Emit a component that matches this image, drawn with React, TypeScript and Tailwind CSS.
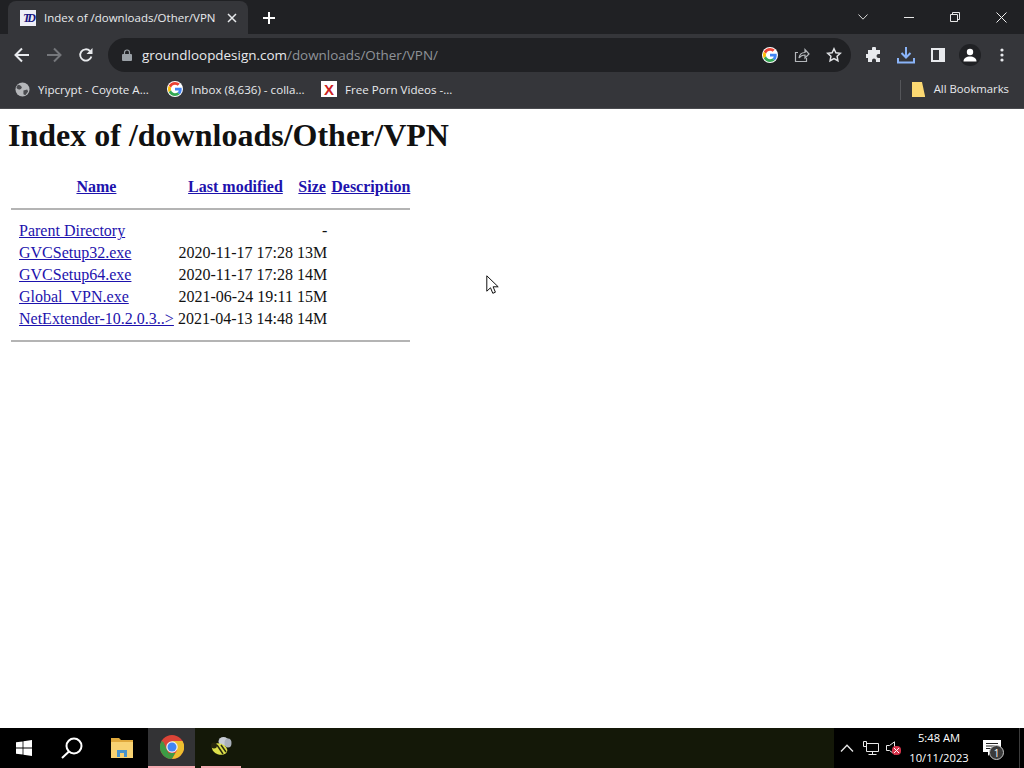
import React from "react";

const UI = { fontFamily: '"Open Sans", "Noto Sans", sans-serif' };

function GoogleG({ size = 16 }: { size?: number }) {
  return (
    <svg width={size} height={size} viewBox="0 0 48 48">
      <path fill="#EA4335" d="M24 9.500c3.500 0 6.700 1.200 9.200 3.600l6.900-6.900C35.900 2.400 30.500 0 24 0 14.600 0 6.500 5.400 2.600 13.200l8 6.200C12.500 13.600 17.800 9.500 24 9.500z" />
      <path fill="#4285F4" d="M47 24.500c0-1.600-.1-3.100-.4-4.500H24v9h12.900c-.6 3-2.200 5.500-4.700 7.200l7.700 6c4.500-4.200 7.100-10.300 7.100-17.700z" />
      <path fill="#FBBC05" d="M10.600 28.600c-.5-1.400-.8-3-.8-4.600s.3-3.200.8-4.600l-8-6.200C.9 16.500 0 20.100 0 24s.9 7.500 2.600 10.800l8-6.200z" />
      <path fill="#34A853" d="M24 48c6.500 0 11.900-2.100 15.900-5.800l-7.700-6c-2.200 1.400-4.900 2.300-8.200 2.300-6.200 0-11.500-4.200-13.400-9.800l-8 6.200C6.500 42.600 14.600 48 24 48z" />
    </svg>
  );
}

function ChromeLogo() {
  return (
    <svg width="24" height="24" viewBox="0 0 48 48">
      <circle cx="24" cy="24" r="24" fill="#DB4437" />
      <path fill="#3d9b45" d="M24 48A24 24 0 0 1 3.200 12L13.600 30 24 48z" />
      <path fill="#3d9b45" d="M3.200 12 13.600 30 24 48l7-12H17L7 14z" />
      <path fill="#EDBE2F" d="M45 12a24 24 0 0 1-21 36l10.400-18L24 12z" />
      <circle cx="24" cy="24" r="11.500" fill="#f2f2f2" />
      <circle cx="24" cy="24" r="9" fill="#4285F4" />
    </svg>
  );
}

function Favicon() {
  return (
    <div className="flex h-4 w-4 items-center justify-center overflow-hidden bg-[#eeeef6]">
      <span className="whitespace-nowrap text-[12px] font-bold italic leading-none tracking-[-3px] text-[#16147e]" style={{ fontFamily: '"Liberation Serif", serif' }}>
        TD
      </span>
    </div>
  );
}

function Tabstrip() {
  return (
    <div className="flex h-[34px] shrink-0 items-end bg-[#202124]">
      <div className="ml-2 flex h-[33px] w-[240px] items-center rounded-t-lg bg-[#35363a] pl-[12px]">
        <Favicon />
        <span className="ml-2 w-[180px] truncate text-[11.5px] text-[#e8eaed]" style={UI}>
          Index of /downloads/Other/VPN
        </span>
        <svg width="10" height="10" viewBox="0 0 10 10" className="ml-[3px]" stroke="#e8eaed" strokeWidth="1.500" fill="none">
          <path d="M1 1l8 8M9 1l-8 8" />
        </svg>
      </div>
      <div className="flex h-[33px] w-[42px] items-center justify-center">
        <svg width="12" height="12" viewBox="0 0 12 12" stroke="#fff" strokeWidth="2" fill="none">
          <path d="M6 0v12M0 6h12" />
        </svg>
      </div>
      <div className="flex-1" />
      <div className="flex h-[34px] items-center">
        <div className="flex h-full w-[46px] items-center justify-center">
          <svg width="10" height="6" viewBox="0 0 10 6" stroke="#d8d8d8" fill="none">
            <path d="M.5.5 5 5.200 9.500.5" />
          </svg>
        </div>
        <div className="flex h-full w-[46px] items-center justify-center">
          <svg width="10" height="10" viewBox="0 0 10 10" stroke="#e8e8e8" fill="none">
            <path d="M0 5.500h10" />
          </svg>
        </div>
        <div className="flex h-full w-[46px] items-center justify-center">
          <svg width="10" height="10" viewBox="0 0 10 10" stroke="#e8e8e8" fill="none">
            <path d="M.5 2.500h7v7h-7zM2.500 2.500v-2h7v7h-2" />
          </svg>
        </div>
        <div className="flex h-full w-[46px] items-center justify-center">
          <svg width="11" height="11" viewBox="0 0 11 11" stroke="#f0f0f0" fill="none">
            <path d="M.5.5l10 10M10.500.5l-10 10" />
          </svg>
        </div>
      </div>
    </div>
  );
}

function ToolIcon({ children }: { children: React.ReactNode }) {
  return <div className="flex h-8 w-8 items-center justify-center">{children}</div>;
}

function Toolbar() {
  return (
    <div className="flex h-[38px] shrink-0 items-center bg-[#35363a] pl-[6px] pt-[4px]">
      <ToolIcon>
        <svg width="16" height="16" viewBox="0 0 16 16" stroke="#e8eaed" strokeWidth="2" fill="none">
          <path d="M15 8H2M8 1.500 1.500 8 8 14.500" />
        </svg>
      </ToolIcon>
      <ToolIcon>
        <svg width="16" height="16" viewBox="0 0 16 16" stroke="#75777b" strokeWidth="2" fill="none">
          <path d="M1 8h13M8 1.500 14.500 8 8 14.500" />
        </svg>
      </ToolIcon>
      <ToolIcon>
        <svg width="16" height="16" viewBox="0 0 16 16" fill="none">
          <path d="M13.400 9.500A5.700 5.700 0 1 1 12 4" stroke="#e8eaed" strokeWidth="1.800" />
          <path d="M14.500 1v6h-6z" fill="#e8eaed" />
        </svg>
      </ToolIcon>
      <div className="ml-[6px] flex h-[34px] w-[743px] items-center rounded-full bg-[#202124] pl-[14px] pr-[1px]">
        <svg width="10" height="12" viewBox="0 0 10 12" fill="#9aa0a6">
          <rect x="0" y="5" width="10" height="7" rx="1" />
          <path d="M2.500 5V3.500a2.500 2.500 0 0 1 5 0V5" fill="none" stroke="#9aa0a6" strokeWidth="1.200" />
        </svg>
        <div className="ml-[10px] flex-1 text-[13.45px]" style={UI}>
          <span className="text-[#e8eaed]">groundloopdesign.com</span>
          <span className="text-[#8f9399]">/downloads/Other/VPN/</span>
        </div>
        <div className="flex items-center">
          <div className="flex w-8 justify-center">
            <div className="rounded-full bg-white p-px">
              <GoogleG size={14} />
            </div>
          </div>
          <div className="flex w-8 justify-center">
            <svg width="16" height="16" viewBox="0 0 16 16" stroke="#b4b7bb" strokeWidth="1.200" fill="none">
              <path d="M4 5.500H1.500v9h11V11M5 11c.5-3.500 3-5.500 6-5.500V2.500l4 4.500-4 4V8c-2.500 0-4.500 1-6 3z" />
            </svg>
          </div>
          <div className="flex w-8 justify-center">
            <svg width="16" height="16" viewBox="0 0 16 16" stroke="#e0e2e5" strokeWidth="1.500" fill="none">
              <path d="m8 1.800 1.900 4 4.400.5-3.200 3 .8 4.400L8 11.500l-3.900 2.200.8-4.400-3.200-3 4.400-.5z" />
            </svg>
          </div>
        </div>
      </div>
      <div className="ml-[7px] flex">
        <ToolIcon>
          <svg width="16" height="16" viewBox="0 0 16 16" fill="#e8eaed">
            <path d="M6 1.500a2 2 0 0 1 4 0V3h4v4h-1.500a2 2 0 0 0 0 4H14v4h-4v-1.500a2 2 0 0 0-4 0V15H2v-4H.5a2 2 0 0 1 0-4H2V3h4z" />
          </svg>
        </ToolIcon>
        <ToolIcon>
          <svg width="18" height="18" viewBox="0 0 18 18" fill="none" stroke="#8ab4f8" strokeWidth="2">
            <path d="M9 1v10M4.500 7 9 11.500 13.500 7M1 12v4.500h16V12" />
          </svg>
        </ToolIcon>
        <ToolIcon>
          <svg width="14" height="14" viewBox="0 0 14 14">
            <rect width="14" height="14" fill="#e8eaed" />
            <rect x="2" y="2" width="6" height="10" fill="#35363a" />
          </svg>
        </ToolIcon>
        <ToolIcon>
          <div className="flex h-[22px] w-[22px] items-center justify-center rounded-full bg-[#202124]">
            <svg width="14" height="14" viewBox="0 0 14 14" fill="#fff">
              <circle cx="7" cy="4" r="3.200" />
              <path d="M0.500 13.500c0-3.500 3-5 6.500-5s6.500 1.500 6.500 5z" />
            </svg>
          </div>
        </ToolIcon>
        <ToolIcon>
          <svg width="4" height="14" viewBox="0 0 4 14" fill="#e8eaed">
            <circle cx="2" cy="2" r="1.600" />
            <circle cx="2" cy="7" r="1.600" />
            <circle cx="2" cy="12" r="1.600" />
          </svg>
        </ToolIcon>
      </div>
    </div>
  );
}

function Bookmark({ icon, label, w }: { icon: React.ReactNode; label: string; w: string }) {
  return (
    <div className={`flex items-center ${w}`}>
      <div className="flex w-4 justify-center">{icon}</div>
      <span className="ml-[8px] whitespace-nowrap text-[11.6px] text-[#e8eaed]" style={UI}>
        {label}
      </span>
    </div>
  );
}

function BookmarksBar() {
  return (
    <div className="flex h-[37px] shrink-0 items-center border-b border-[#4a4b4f] bg-[#35363a] pb-px pl-[14px] pr-[15px]">
      <Bookmark
        w="w-[153px]"
        label="Yipcrypt - Coyote A..."
        icon={
          <svg width="15" height="15" viewBox="0 0 16 16">
            <circle cx="8" cy="8" r="7.500" fill="#b5b7ba" />
            <path d="M3 3c2 0 3 1 4 2S6 8 4.500 8 1.500 6 1.500 6zM9 9l4-1 1 2-3 4-2-1z" fill="#4a4b4f" />
          </svg>
        }
      />
      <Bookmark
        w="w-[154px]"
        label="Inbox (8,636) - colla..."
        icon={
          <div className="rounded-full bg-white p-px">
            <GoogleG size={14} />
          </div>
        }
      />
      <Bookmark
        w="w-[140px]"
        label="Free Porn Videos -..."
        icon={
          <div className="flex h-4 w-4 items-center justify-center bg-white text-[15px] font-bold leading-none text-[#cc2222]" style={{ fontFamily: '"Liberation Sans", sans-serif' }}>
            X
          </div>
        }
      />
      <div className="flex-1" />
      <div className="h-[20px] w-px bg-[#55565a]" />
      <svg width="13" height="15" viewBox="0 0 13 15" className="ml-[11px]">
        <path d="M0 0h10l3 14v1H0z" fill="#fbd872" />
      </svg>
      <span className="ml-[9px] text-[11.3px] text-[#e8eaed]" style={UI}>
        All Bookmarks
      </span>
    </div>
  );
}

const Link = ({ children }: { children: React.ReactNode }) => <a className="text-[#1d12ad] underline">{children}</a>;

const ROWS = [
  ["GVCSetup32.exe", "2020-11-17 17:28", "13M"],
  ["GVCSetup64.exe", "2020-11-17 17:28", "14M"],
  ["Global_VPN.exe", "2021-06-24 19:11", "15M"],
  ["NetExtender-10.2.0.3..>", "2021-04-13 14:48", "14M"],
];

function Listing() {
  return (
    <div className="flex-1 bg-white p-2 text-[16px] leading-[18px] text-[#111111]" style={{ fontFamily: '"Liberation Serif", serif' }}>
      <h1 className="mb-[21.44px] text-[32px] font-bold leading-[37px]">Index of /downloads/Other/VPN</h1>
      <table className="border-separate border-spacing-[2px]">
        <tbody>
          <tr>
            <th className="p-px">&nbsp;</th>
            <th className="p-px"><Link>Name</Link></th>
            <th className="p-px"><Link>Last modified</Link></th>
            <th className="p-px"><Link>Size</Link></th>
            <th className="p-px"><Link>Description</Link></th>
          </tr>
          <tr>
            <th colSpan={5} className="p-px">
              <hr className="my-2 h-[2px] border-0 bg-[#b4b4b4]" />
            </th>
          </tr>
          <tr>
            <td className="p-px">&nbsp;</td>
            <td className="p-px"><Link>Parent Directory</Link></td>
            <td className="p-px">&nbsp;</td>
            <td className="p-px text-right">- </td>
            <td className="p-px">&nbsp;</td>
          </tr>
          {ROWS.map((r) => (
            <tr key={r[0]}>
              <td className="p-px">&nbsp;</td>
              <td className="p-px"><Link>{r[0]}</Link></td>
              <td className="p-px text-right">{r[1]}</td>
              <td className="p-px text-right">{r[2]}</td>
              <td className="p-px">&nbsp;</td>
            </tr>
          ))}
          <tr>
            <th colSpan={5} className="p-px">
              <hr className="my-2 h-[2px] border-0 bg-[#b4b4b4]" />
            </th>
          </tr>
        </tbody>
      </table>
    </div>
  );
}

function Taskbar() {
  return (
    <div className="flex h-10 shrink-0 items-stretch bg-[#141808]">
      <div className="flex w-[148px] bg-black">
        <div className="flex w-12 items-center justify-center">
          <svg width="16" height="16" viewBox="0 0 16 16" fill="#fff">
            <path d="M0 2.300 6.600 1.400v6.200H0zM7.400 1.300 16 0v7.600H7.400zM0 8.400h6.600v6.200L0 13.700zM7.400 8.400H16V16l-8.600-1.300z" />
          </svg>
        </div>
        <div className="flex w-12 items-center justify-center">
          <svg width="22" height="22" viewBox="0 0 22 22" stroke="#fff" strokeWidth="2" fill="none">
            <circle cx="13" cy="9" r="7.500" />
            <path d="M8 14.500 1 21" />
          </svg>
        </div>
        <div className="flex w-[52px] items-center justify-center">
          <svg width="22" height="20" viewBox="0 0 22 20">
            <path d="M0 0h8l2 2h12v18H0z" fill="#e0a93c" />
            <path d="M0 4h22v16H0z" fill="#f8d272" />
            <path d="M6 19v-7h10v7h-3v-4H9v4z" fill="#4a94cc" />
          </svg>
        </div>
      </div>
      <div className="flex w-[47px] flex-col items-center justify-center border-b-[2px] border-[#f4a9b0] bg-[#333335]">
        <ChromeLogo />
      </div>
      <div className="ml-[6px] flex w-[40px] items-center justify-center border-b-[2px] border-[#f4a9b0]">
        <svg width="24" height="24" viewBox="0 0 24 24">
          <ellipse cx="14.500" cy="6.500" rx="5" ry="4.500" fill="#c8ccd4" />
          <ellipse cx="19" cy="8" rx="3.500" ry="4.500" fill="#aab0ba" />
          <ellipse cx="10.500" cy="14" rx="8" ry="5.500" fill="#dde04a" transform="rotate(20 10.500 14)" />
          <path d="M8 10l6 9M12 10l5 7" stroke="#2a2a10" strokeWidth="1.500" />
          <circle cx="5" cy="10.500" r="3" fill="#26260c" />
        </svg>
      </div>
      <div className="flex-1" />
      <div className="flex w-[190px] items-center bg-black">
        <div className="flex w-[24px] justify-center pl-[2px]">
          <svg width="14" height="8" viewBox="0 0 14 8" stroke="#e8e8e8" strokeWidth="1.300" fill="none">
            <path d="M1 7.500 7 1.200l6 6.300" />
          </svg>
        </div>
        <div className="flex w-[26px] justify-center">
          <svg width="16" height="14" viewBox="0 0 16 14" stroke="#e8e8e8" fill="none">
            <path d="M3.500 3V.5h-3v5h3M3.500 2.500h12v8h-12zM9.500 10.500v3M5.500 13.500h8" />
          </svg>
        </div>
        <div className="relative flex w-[19px] justify-start pl-[2px]">
          <svg width="9" height="14" viewBox="0 0 9 14" stroke="#e8e8e8" fill="none">
            <path d="M.5 4.500h3L8.500.8v12.400l-5-3.700h-3z" />
          </svg>
          <div className="absolute left-[8px] top-[5px] flex h-[9px] w-[9px] items-center justify-center rounded-sm bg-[#d8344c]">
            <svg width="5" height="5" viewBox="0 0 5 5" stroke="#fff" fill="none">
              <path d="M0 0l5 5M5 0L0 5" />
            </svg>
          </div>
        </div>
        <div className="w-[72px] text-center text-[11.2px] leading-[20px] text-white" style={UI}>
          <div>5:48 AM</div>
          <div>10/11/2023</div>
        </div>
        <div className="relative ml-[6px] flex w-[22px] justify-center">
          <svg width="18" height="16" viewBox="0 0 18 16">
            <path d="M0 0h18v12H8l-3 4v-4H0z" fill="#fff" />
            <path d="M3 3.500h12M3 6h12M3 8.500h12" stroke="#222" />
          </svg>
          <div className="absolute left-[8px] top-[5px] flex h-[15px] w-[15px] items-center justify-center rounded-full border border-[#c8c8c8] bg-[#3a3a3a] text-[10px] leading-none text-white" style={UI}>
            1
          </div>
        </div>
        <div className="ml-[16px] h-full w-px bg-[#3c3c3c]" />
      </div>
    </div>
  );
}

export default function App() {
  return (
    <div className="relative flex h-[768px] w-[1024px] flex-col overflow-hidden">
      <Tabstrip />
      <Toolbar />
      <BookmarksBar />
      <Listing />
      <Taskbar />
      <svg width="13" height="20" viewBox="0 0 13 20" className="absolute left-[486px] top-[275px]" fill="#fff" stroke="#111" strokeWidth="1">
        <path d="M.8.8v15.400l3.700-3.400 2.300 5.500 2.600-1.100-2.300-5.400h5.100z" />
      </svg>
    </div>
  );
}
